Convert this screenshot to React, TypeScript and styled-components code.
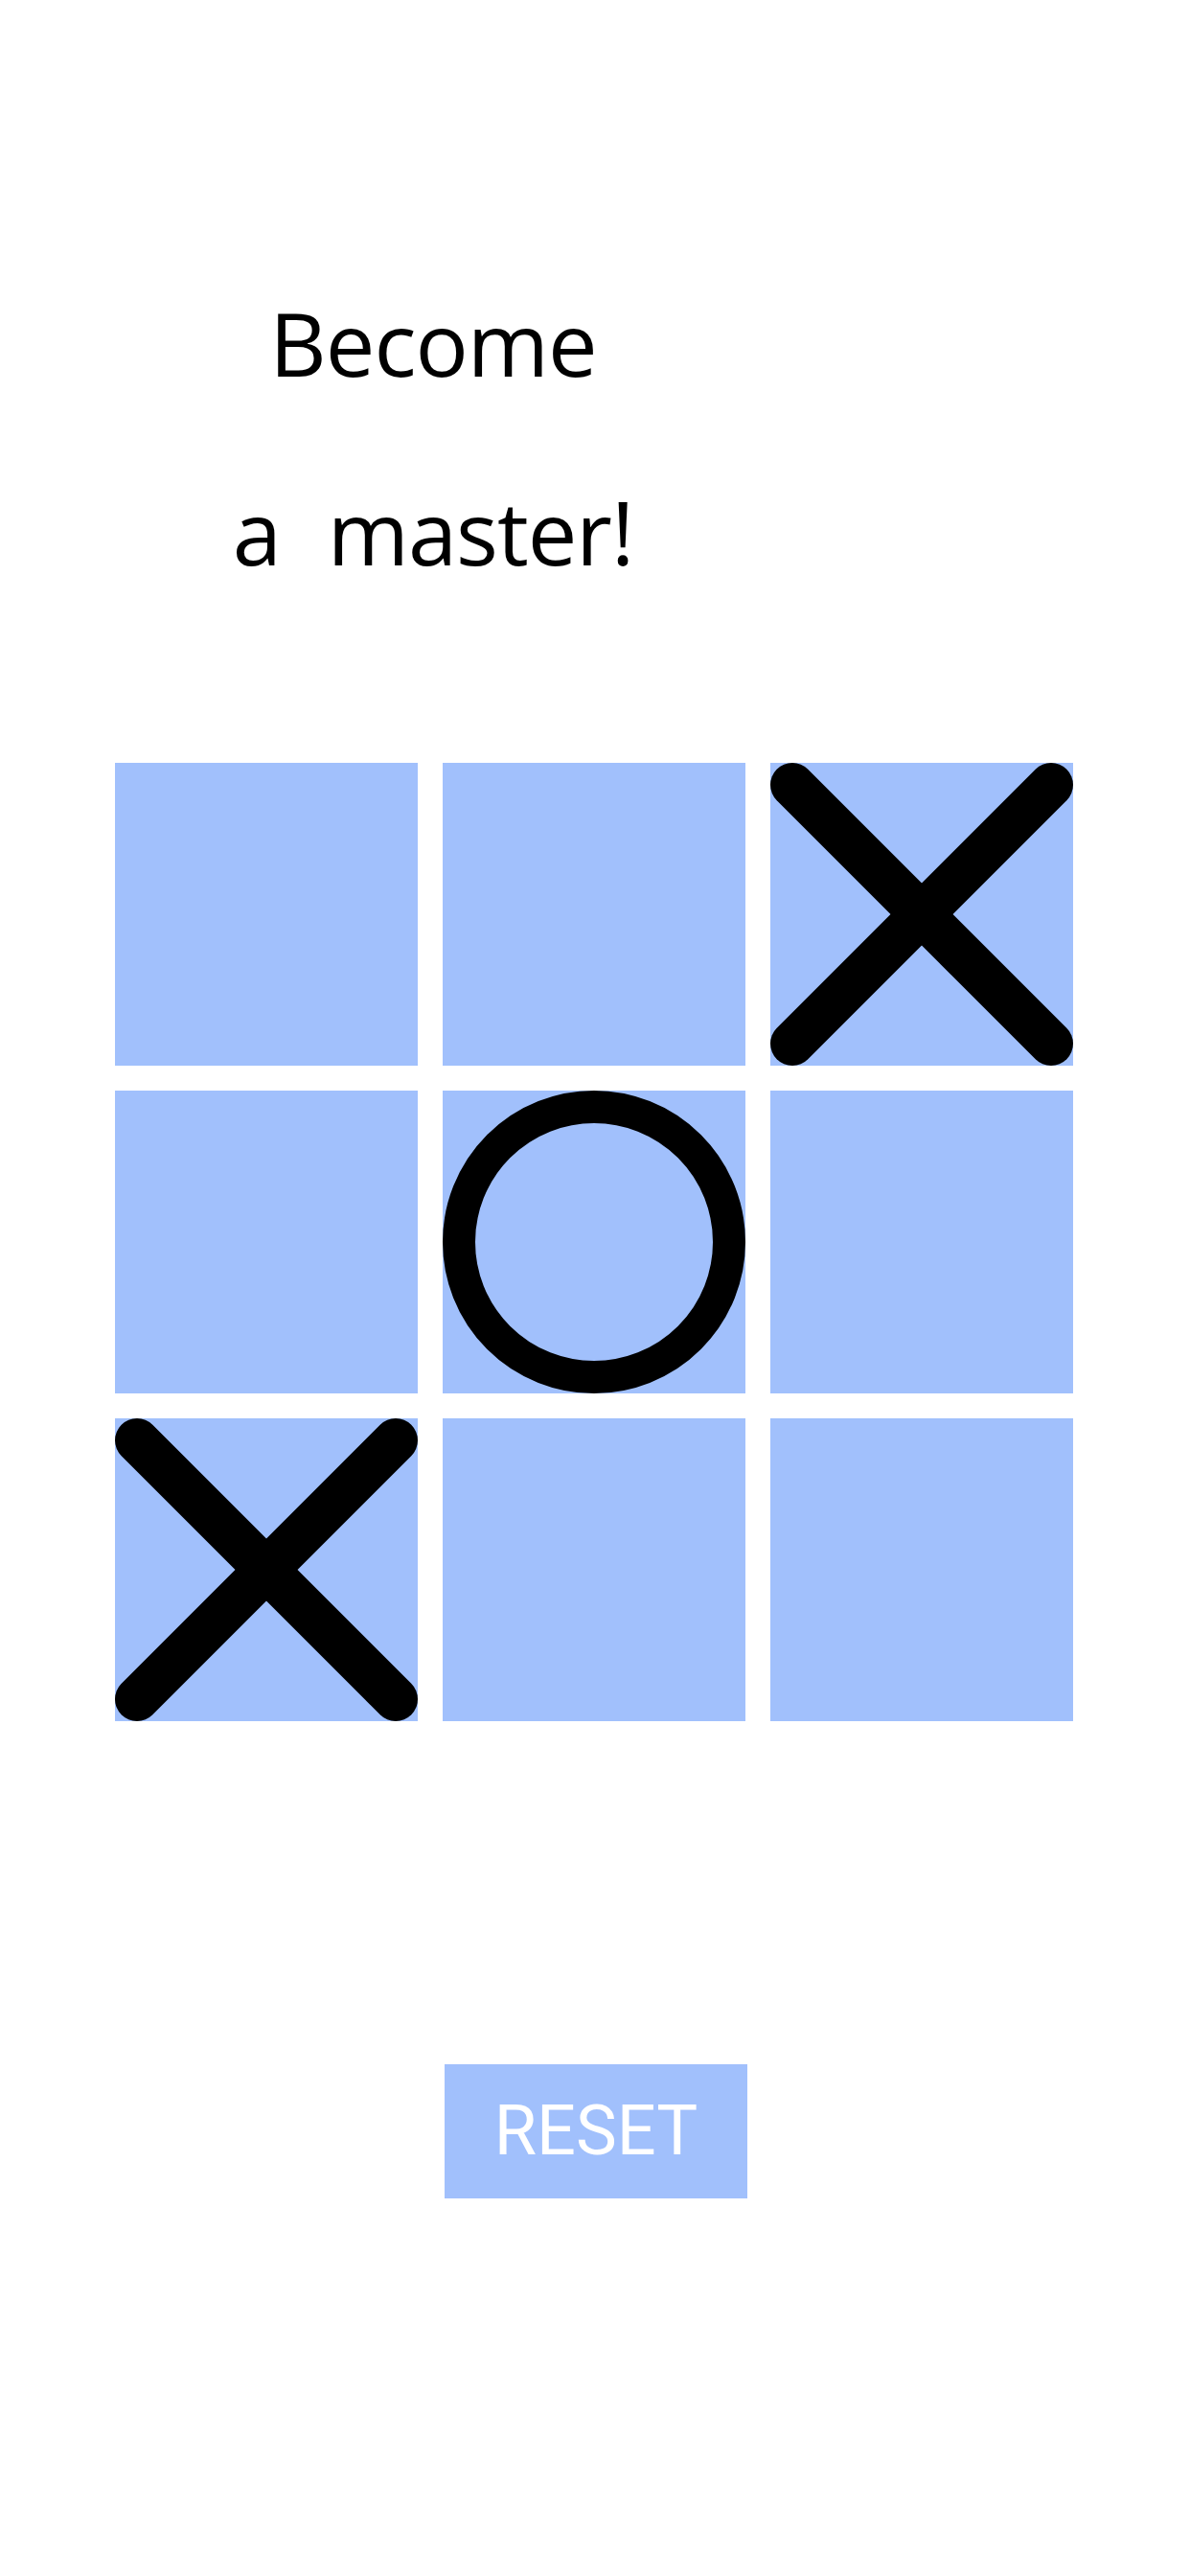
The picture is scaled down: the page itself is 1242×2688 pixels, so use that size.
import React from "react";
import styled, { createGlobalStyle } from "styled-components";

const GlobalStyle = createGlobalStyle`
  html, body {
    margin: 0;
    padding: 0;
    background: #ffffff;
  }
  body {
    font-family: "Open Sans", "Liberation Sans", sans-serif;
  }
`;

const Screen = styled.div`
  width: 1242px;
  min-height: 2688px;
  display: flex;
  flex-direction: column;
  align-items: flex-start;
  background: #ffffff;
`;

const Title = styled.h1`
  margin: 259px 0 0 0;
  width: 904px;
  font-family: "Open Sans", "Liberation Sans", sans-serif;
  font-weight: 400;
  font-size: 92px;
  line-height: 197px;
  letter-spacing: -1px;
  word-spacing: 26px;
  text-align: center;
  color: #000000;
`;

const Board = styled.div`
  margin: 143px 0 0 120px;
  display: grid;
  grid-template-columns: repeat(3, 316px);
  grid-template-rows: repeat(3, 316px);
  gap: 26px;
`;

const Cell = styled.div`
  background: #a1c0fc;
  display: flex;
  align-items: center;
  justify-content: center;
  overflow: visible;
`;

const Ring = styled.div`
  box-sizing: border-box;
  width: 316px;
  height: 316px;
  border-radius: 50%;
  border: 34px solid #000000;
`;

const ResetButton = styled.button`
  margin: 358px 0 0 464px;
  width: 316px;
  height: 140px;
  border: none;
  padding: 0;
  background: #a1c0fc;
  color: #ffffff;
  font-family: Roboto, "Liberation Sans", sans-serif;
  font-weight: 400;
  font-size: 72px;
  line-height: 1;
  display: flex;
  align-items: center;
  justify-content: center;
  cursor: pointer;
`;

const Cross: React.FC = () => (
  <svg width="316" height="316" viewBox="0 0 316 316">
    <g stroke="#000000" strokeWidth="46" strokeLinecap="round">
      <line x1="23" y1="23" x2="293" y2="293" />
      <line x1="293" y1="23" x2="23" y2="293" />
    </g>
  </svg>
);

const board: Array<"X" | "O" | ""> = ["", "", "X", "", "O", "", "X", "", ""];

export default function App() {
  return (
    <>
      <GlobalStyle />
      <Screen>
        <Title>
          Become
          <br />
          a master!
        </Title>
        <Board>
          {board.map((v, i) => (
            <Cell key={i}>
              {v === "X" && <Cross />}
              {v === "O" && <Ring />}
            </Cell>
          ))}
        </Board>
        <ResetButton type="button">RESET</ResetButton>
      </Screen>
    </>
  );
}
